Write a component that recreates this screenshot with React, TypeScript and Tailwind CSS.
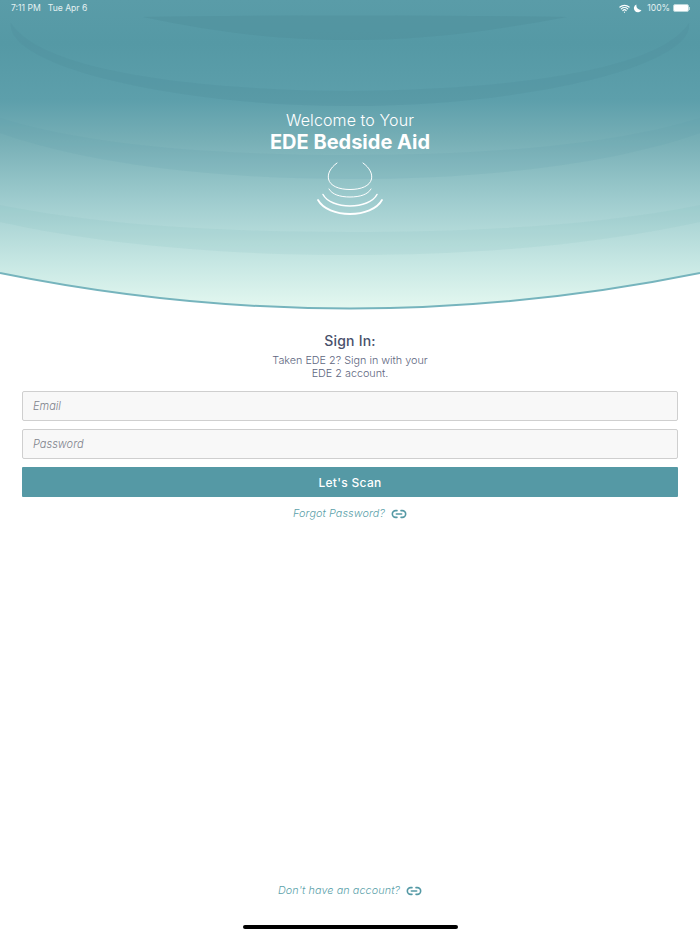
import { Link2, Wifi } from "lucide-react";

function HeaderArt() {
  return (
    <svg className="absolute inset-0" width="700" height="312" viewBox="0 0 700 312">
      <defs>
        <linearGradient id="hero" x1="0" y1="0" x2="0" y2="1">
          <stop offset="0" stopColor="#5a9ca8" />
          <stop offset="0.14" stopColor="#5599a5" />
          <stop offset="0.32" stopColor="#5d9fab" />
          <stop offset="0.45" stopColor="#77afb6" />
          <stop offset="0.65" stopColor="#a0cdcf" />
          <stop offset="0.85" stopColor="#c8e8e4" />
          <stop offset="1" stopColor="#e6f9f1" />
        </linearGradient>
        <clipPath id="heroClip">
          <path d="M0 0H700V273Q350 344 0 273Z" />
        </clipPath>
      </defs>
      <g clipPath="url(#heroClip)">
        <rect width="700" height="312" fill="url(#hero)" />
        <path d="M143 17C280 15 430 15 567 17C480 33 420 40 350 40C280 40 220 33 143 17Z" fill="#4f8f9c" fillOpacity="0.5" />
        <path d="M11 23C40 70 190 90 350 91C510 90 660 70 689 23C695 65 530 106 350 106C170 106 5 65 11 23Z" fill="#4f8f9c" fillOpacity="0.3" />
        <path d="M0 118C90 146 220 155 350 155C480 155 610 146 700 118V133C610 165 480 179 350 179C220 179 90 165 0 133Z" fill="#5a9ca8" fillOpacity="0.14" />
        <path d="M0 205C100 225 220 232 350 232C480 232 600 225 700 205V222C600 244 480 255 350 255C220 255 100 244 0 222Z" fill="#7fb8bd" fillOpacity="0.13" />
      </g>
      <path d="M0 273Q350 344 700 273" fill="none" stroke="#76b4bd" strokeWidth="2" />
    </svg>
  );
}

function ScanLogo() {
  return (
    <svg width="68" height="56" viewBox="0 0 68 56" fill="none" stroke="#ffffff" strokeLinecap="round">
      <path d="M21 2C14 7 11.5 13 12.5 18C14 25 23 28.5 34 28.5C45 28.5 54 25 55.5 18C56.5 13 54 7 47 2" strokeWidth="1" />
      <path d="M13 28C16 33.5 24 36 34 36C44 36 52 33.5 55 28" strokeWidth="1" />
      <path d="M7 33.5C11 41 22 45 34 45C46 45 57 41 61 33.5" strokeWidth="1.5" />
      <path d="M2 39C7 48 20 53 34 53C48 53 61 48 66 39" strokeWidth="1.8" />
    </svg>
  );
}

function StatusBar() {
  return (
    <div className="relative flex h-4 items-center justify-between pl-[11px] pr-[10px] pt-[1px] text-[8.6px] text-[#e4f1f2]">
      <div className="flex gap-[7px]">
        <span>7:11 PM</span>
        <span>Tue Apr 6</span>
      </div>
      <div className="flex items-center gap-[3px]">
        <Wifi size={11} strokeWidth={2.6} className="text-white" />
        <svg width="9" height="9" viewBox="0 0 9 9" fill="#ffffff">
          <path d="M3.5 0.5A4 4 0 1 0 8.5 6A4.5 4.5 0 0 1 3.5 0.5Z" />
        </svg>
        <span className="ml-[2px]">100%</span>
        <span className="flex items-center">
          <span className="block h-[8px] w-[16px] rounded-[2px] border border-[#b8d6da] bg-white" />
          <span className="block h-[3px] w-[1px] bg-[#b8d6da]" />
        </span>
      </div>
    </div>
  );
}

function LinkRow({ label }: { label: string }) {
  return (
    <a className="flex items-center justify-center gap-[6px] text-[10.8px] font-light italic tracking-[0.1px] text-[#5b9faa]">
      <span>{label}</span>
      <Link2 size={16} strokeWidth={2.4} className="text-[#5599a5]" />
    </a>
  );
}

export default function App() {
  return (
    <div
      className="flex h-[934px] w-[700px] flex-col overflow-hidden bg-white"
      style={{ fontFamily: "Inter, 'Open Sans', sans-serif" }}
    >
      <header className="relative h-[312px] shrink-0">
        <HeaderArt />
        <StatusBar />
        <div className="relative mt-[94px] flex flex-col items-center text-white">
          <h2 className="text-[16px] font-light leading-[21px] tracking-[0.1px]">Welcome to Your</h2>
          <h1 className="text-[20px] font-bold leading-[22px]">EDE Bedside Aid</h1>
          <div className="mt-[8px]">
            <ScanLogo />
          </div>
        </div>
      </header>

      <main className="flex flex-1 flex-col px-[22px]">
        <div className="mt-[20px] text-center">
          <h3 className="text-[14px] font-medium leading-[17px] tracking-[0.2px] text-[#48506b]">Sign In:</h3>
          <p className="mt-[5px] text-[10.8px] font-light leading-[13px] text-[#5e6680]">
            Taken EDE 2? Sign in with your
            <br />
            EDE 2 account.
          </p>
        </div>

        <div className="mt-[11px] flex flex-col gap-[8px]">
          <input
            readOnly
            placeholder="Email"
            className="h-[30px] w-full rounded-[2px] border border-[#cfcfcf] bg-[#f8f8f8] px-[10px] text-[11px] font-light italic placeholder:text-[#80838c]"
          />
          <input
            readOnly
            placeholder="Password"
            className="h-[30px] w-full rounded-[2px] border border-[#cfcfcf] bg-[#f8f8f8] px-[10px] text-[11px] font-light italic placeholder:text-[#80838c]"
          />
          <button className="h-[30px] w-full rounded-[1px] bg-[#5599a5] pt-[1px] text-[12px] font-medium tracking-[0.3px] text-white">
            Let's Scan
          </button>
        </div>

        <div className="mt-[9px]">
          <LinkRow label="Forgot Password?" />
        </div>

        <div className="mt-auto flex flex-col items-center">
          <LinkRow label="Don't have an account?" />
          <div className="mb-[5px] mt-[26px] h-[4px] w-[215px] rounded-full bg-black" />
        </div>
      </main>
    </div>
  );
}
